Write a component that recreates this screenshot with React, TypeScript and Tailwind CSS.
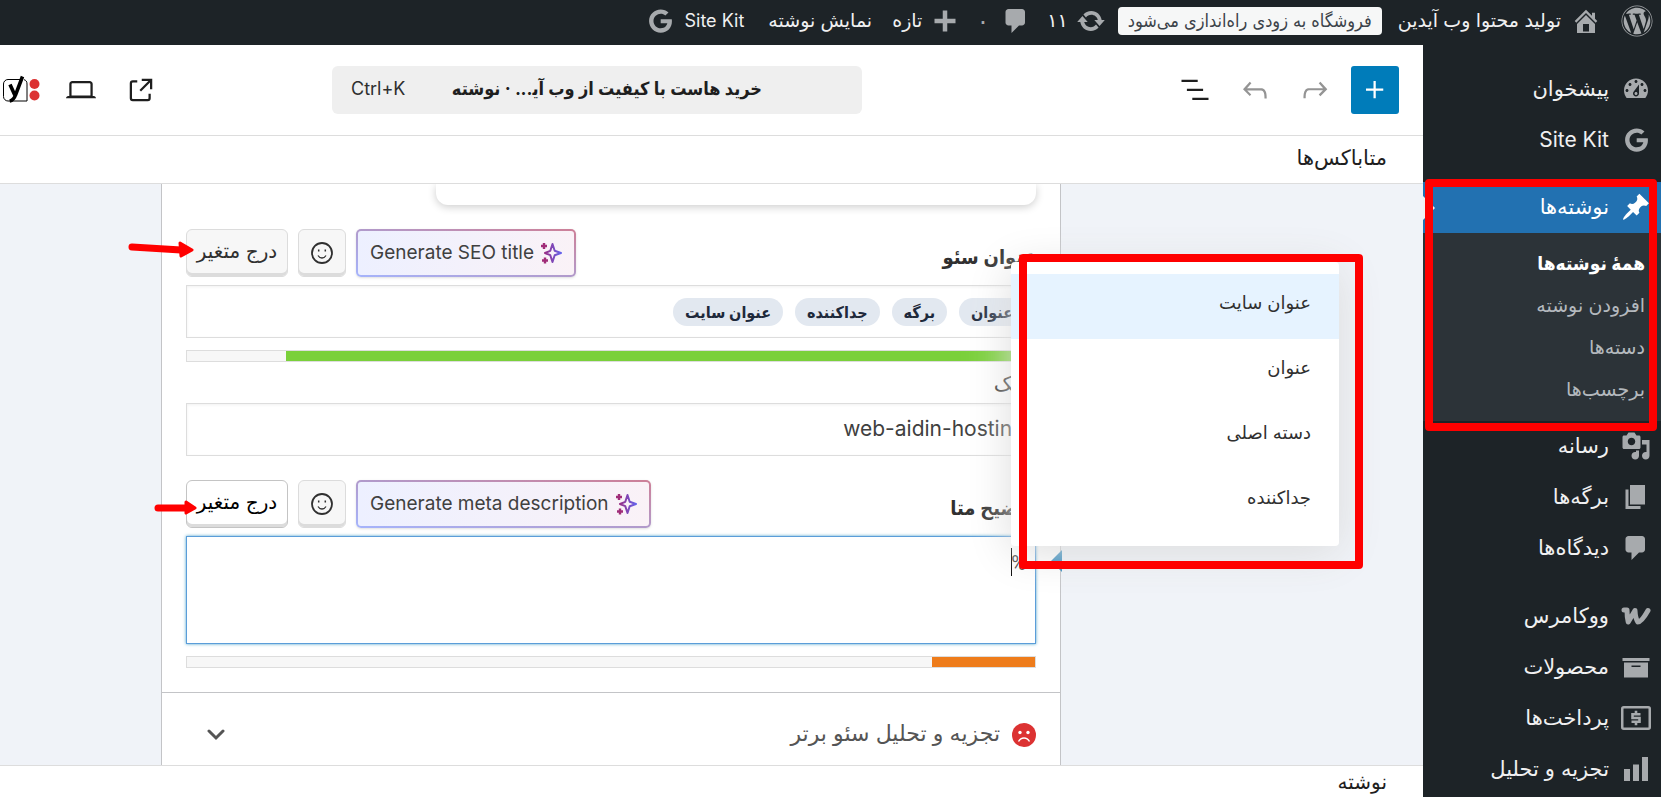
import React from 'react';
import clsx from 'clsx';
import { FaGoogle, FaWordpress } from 'react-icons/fa';

const ICONS = {
  dashboard:
    'M3.76 16h12.48c1.1-1.37 1.76-3.11 1.76-5 0-4.42-3.58-8-8-8s-8 3.58-8 8c0 1.89.66 3.63 1.76 5zM10 4c.55 0 1 .45 1 1s-.45 1-1 1-1-.45-1-1 .45-1 1-1zM6 6c.55 0 1 .45 1 1s-.45 1-1 1-1-.45-1-1 .45-1 1-1zm8 0c.55 0 1 .45 1 1s-.45 1-1 1-1-.45-1-1 .45-1 1-1zm-5.37 5.55L12 7v6c0 1.1-.9 2-2 2s-2-.9-2-2c0-.57.24-1.08.63-1.45zM4 10c.55 0 1 .45 1 1s-.45 1-1 1-1-.45-1-1 .45-1 1-1zm12 0c.55 0 1 .45 1 1s-.45 1-1 1-1-.45-1-1 .45-1 1-1zm-5 3c0-.55-.45-1-1-1s-1 .45-1 1 .45 1 1 1 1-.45 1-1z',
  home: 'M16 8.5l1.53 1.53-1.06 1.06L10 4.6l-6.47 6.49-1.06-1.06L10 2.5l4 4v-2h2v4zm-6-2.46l6 5.99V18H4v-5.97zM12 17v-5H8v5h4z',
  comments: 'M5 2h9c1.1 0 2 .9 2 2v7c0 1.1-.9 2-2 2h-2l-5 5v-5H5c-1.1 0-2-.9-2-2V4c0-1.1.9-2 2-2z',
  update:
    'M10.2 3.28c3.53 0 6.43 2.61 6.92 6h2.08l-3.5 4-3.5-4h2.32c-.45-1.97-2.21-3.45-4.32-3.45-1.45 0-2.73.71-3.54 1.78L4.95 5.66C6.23 4.2 8.11 3.28 10.2 3.28zm-.4 13.44c-3.52 0-6.43-2.61-6.92-6H.8l3.5-4c1.17 1.33 2.33 2.67 3.5 4H5.48c.45 1.97 2.21 3.45 4.32 3.45 1.45 0 2.73-.71 3.54-1.78l1.71 1.95c-1.28 1.46-3.15 2.38-5.25 2.38z',
  plus: 'M17 8.5v3h-5.5V17h-3v-5.5H3v-3h5.5V3h3v5.5H17z',
  pin: 'M10.44 3.02l1.82-1.82 6.36 6.35-1.83 1.82c-1.05-.68-2.48-.57-3.41.36l-.75.75c-.92.93-1.04 2.35-.35 3.41l-1.83 1.82-2.41-2.41-2.8 2.79c-.42.42-3.38 2.71-3.8 2.29s1.86-3.39 2.28-3.81l2.79-2.79L4.1 9.36l1.83-1.82c1.05.69 2.48.57 3.4-.36l.75-.75c.93-.92 1.05-2.35.36-3.41z',
  media:
    'M13 11V4c0-.55-.45-1-1-1h-1.67L9 1H5L3.67 3H2c-.55 0-1 .45-1 1v7c0 .55.45 1 1 1h10c.55 0 1-.45 1-1zM7 4.5c1.38 0 2.5 1.12 2.5 2.5S8.38 9.5 7 9.5 4.5 8.38 4.5 7 5.62 4.5 7 4.5zM14 6h5v10.5c0 1.38-1.12 2.5-2.5 2.5S14 17.88 14 16.5s1.12-2.5 2.5-2.5c.17 0 .34.02.5.05V9h-3V6zm-4 8.05V13h2v3.5c0 1.38-1.12 2.5-2.5 2.5S7 17.88 7 16.5 8.12 14 9.5 14c.17 0 .34.02.5.05z',
  pages: 'M6 15V2h10v13H6zm-1 1h8v2H3V5h2v11z',
  archive: 'M19 4v2H1V4h18zM2 7h16v10H2V7zm11 3V9H7v1h6z',
  chart: 'M18 18V2h-4v16h4zm-6 0V7H8v11h4zm-6 0v-8H2v8h4z',
};

function Dashicon({ name, className }: { name: keyof typeof ICONS; className?: string }) {
  return (
    <svg viewBox="0 0 20 20" className={clsx('w-[30px] h-[30px] shrink-0', className)} fill="currentColor" aria-hidden="true">
      <path fillRule="evenodd" d={ICONS[name]} />
    </svg>
  );
}

function WooIcon() {
  return (
    <svg viewBox="0 0 30 20" className="w-[30px] h-5" fill="none" stroke="currentColor" strokeWidth="5" strokeLinecap="round" strokeLinejoin="round" aria-hidden="true">
      <path d="M3 4h3c0 5 .2 8 1.2 12L14 4.500c.2 5 .6 8 2.800 11.500 2.400 0 6-4 10.200-11.500" />
    </svg>
  );
}

function PaymentIcon() {
  return (
    <svg viewBox="0 0 30 24" className="w-[30px] h-6" fill="none" stroke="currentColor" strokeWidth="2.500" aria-hidden="true">
      <rect x="1.250" y="1.250" width="27.500" height="21.500" rx="1.500" />
      <path d="M19.500 8.300h-8v3.700h7v3.700h-8M15 4.800v2.500M15 16.500v2.700" strokeWidth="2.600" />
    </svg>
  );
}

function GoogleIcon() {
  return <FaGoogle className="w-[23px] h-6" aria-hidden="true" />;
}

function EditorIcon({ d }: { d: string }) {
  return (
    <svg viewBox="0 0 24 24" className="w-9 h-9" fill="currentColor" aria-hidden="true">
      <path d={d} />
    </svg>
  );
}

function AdminBar() {
  return (
    <header className="flex h-[45px] shrink-0 items-center bg-[#1d2327] pb-1 pr-2 text-[19px] leading-7 text-[#f0f0f1]">
      <a href="#about" aria-label="وردپرس" className="text-[#a7aaad]">
        <FaWordpress className="h-8 w-8" />
      </a>
      <a href="#site" className="mr-5 flex items-center gap-[10px]">
        <Dashicon name="home" className="text-[#a7aaad]" />
        {'تولید محتوا وب آیدین'}
      </a>
      <a
        href="#store"
        className="mr-4 rounded-sm bg-[#f6f7f7] px-[10px] font-['Inter','DejaVu_Sans_Condensed',sans-serif] text-[18px] text-[#3c434a]"
      >
        فروشگاه به زودی راه‌اندازی می‌شود
      </a>
      <a href="#updates" className="mr-3 flex items-center gap-2">
        <Dashicon name="update" className="text-[#a7aaad]" />
        ۱۱
      </a>
      <a href="#comments" className="mr-4 flex items-center gap-3 text-[#a7aaad]">
        <Dashicon name="comments" />
        <span className="text-2xl leading-7">۰</span>
      </a>
      <a href="#new" className="mr-4 flex items-center gap-2">
        <Dashicon name="plus" className="text-[#a7aaad]" />
        تازه
      </a>
      <a href="#view" className="mr-5">
        نمایش نوشته
      </a>
      <a href="#sitekit" className="mr-6 flex items-center gap-3 text-[18px]">
        Site Kit
        <span className="text-[#a7aaad]">
          <GoogleIcon />
        </span>
      </a>
    </header>
  );
}

function MenuItem({ icon, label, current }: { icon: React.ReactNode; label: string; current?: boolean }) {
  return (
    <li>
      <a
        href="#menu"
        className={clsx('flex h-[51px] items-center pb-0.5 text-[21px]', current ? 'bg-[#2271b1] text-white' : 'text-[#f0f0f1]')}
      >
        <span className={clsx('ml-0.5 flex w-[50px] shrink-0 justify-center', current ? 'text-white' : 'text-[#a7aaad]')}>{icon}</span>
        {label}
      </a>
    </li>
  );
}

function Sidebar() {
  const sub = ['همهٔ نوشته‌ها', 'افزودن نوشته', 'دسته‌ها', 'برچسب‌ها'];
  return (
    <nav className="w-[238px] shrink-0 bg-[#1d2327] pt-[19px]">
      <ul>
        <MenuItem icon={<Dashicon name="dashboard" />} label="پیشخوان" />
        <MenuItem icon={<GoogleIcon />} label="Site Kit" />
      </ul>
      <div className="relative mt-4">
        <ul>
          <MenuItem icon={<Dashicon name="pin" />} label="نوشته‌ها" current />
        </ul>
        <span className="absolute left-0 top-[14px] h-0 w-0 border-y-[12px] border-l-[12px] border-y-transparent border-l-[#f0f0f1]" />
        <ul className="bg-[#2c3338] py-[10px] pr-4 text-[19px]">
          {sub.map((s, i) => (
            <li key={s}>
              <a
                href="#sub"
                className={clsx(
                  'flex h-[42px] items-center',
                  i === 0 ? "font-['Inter','DejaVu_Sans_Condensed',sans-serif] font-bold text-white" : 'text-[#b4b9be]'
                )}
              >
                {s}
              </a>
            </li>
          ))}
        </ul>
        <span className="pointer-events-none absolute -bottom-[10px] -top-[3px] left-[2px] right-1 z-10 rounded border-8 border-[#ff0000]" />
      </div>
      <ul>
        <MenuItem icon={<Dashicon name="media" />} label="رسانه" />
        <MenuItem icon={<Dashicon name="pages" />} label="برگه‌ها" />
        <MenuItem icon={<Dashicon name="comments" />} label="دیدگاه‌ها" />
      </ul>
      <ul className="mt-[17px]">
        <MenuItem icon={<WooIcon />} label="ووکامرس" />
        <MenuItem icon={<Dashicon name="archive" />} label="محصولات" />
        <MenuItem icon={<PaymentIcon />} label="پرداخت‌ها" />
        <MenuItem icon={<Dashicon name="chart" />} label="تجزیه و تحلیل" />
      </ul>
    </nav>
  );
}

function ToolButton({ label, children, className }: { label: string; children: React.ReactNode; className?: string }) {
  return (
    <button type="button" aria-label={label} className={clsx('flex h-12 w-12 shrink-0 items-center justify-center', className)}>
      {children}
    </button>
  );
}

function EditorHeader() {
  return (
    <div className="flex h-[91px] shrink-0 items-center border-b border-[#ddd] pr-6 text-[#1e1e1e]">
      <div className="flex flex-1 gap-3">
        <ToolButton label="افزودن" className="rounded-[3px] bg-[#007cba] text-white">
          <EditorIcon d="M11 12.500V17.500H12.500V12.500H17.500V11H12.500V6H11V11H6V12.500H11Z" />
        </ToolButton>
        <ToolButton label="انجام دوباره" className="text-[#949494]">
          <EditorIcon d="M15.600 6.500l-1.100 1 2.900 3.300H8c-.9 0-1.700.3-2.300.9-1.400 1.500-1.400 4.200-1.400 5.600v.2h1.500v-.3c0-1.100 0-3.500 1-4.500.3-.3.7-.5 1.300-.5h9.200L14.500 15l1.100 1.100 4.600-4.600-4.600-5z" />
        </ToolButton>
        <ToolButton label="واگرد" className="text-[#949494]">
          <EditorIcon d="M18.300 11.700c-.6-.6-1.400-.9-2.300-.9H6.700l2.900-3.300-1.100-1-4.500 5L8.500 16l1-1-2.700-2.700H16c.5 0 .9.2 1.300.5 1 1 1 3.400 1 4.500v.3h1.500v-.2c0-1.500 0-4.300-1.500-5.700z" />
        </ToolButton>
        <ToolButton label="نمای فهرست">
          <EditorIcon d="M13.800 5.200H3v1.500h10.800V5.200zm-3.600 12v1.500H21v-1.500H10.200zm7.200-6H6.600v1.500h10.800v-1.500z" />
        </ToolButton>
      </div>
      <button
        type="button"
        className="flex h-12 w-[530px] items-center rounded-md bg-[#efefef] pb-1 pl-[19px] pr-[100px] font-['Inter','DejaVu_Sans_Condensed',sans-serif] text-[18px]"
      >
        <span className="grow whitespace-nowrap text-right font-bold">{'خرید هاست با کیفیت از وب آی\u200d...  · نوشته'}</span>
        <span dir="ltr" className="text-[#2f2f2f]">Ctrl+K</span>
      </button>
      <div className="-ml-[3px] flex w-[335px] justify-end gap-3">
        <ToolButton label="نمایش">
          <EditorIcon d="M19.500 4.500h-7V6h4.440l-5.970 5.970 1.060 1.060L18 7.060v4.440h1.500v-7Zm-13 1a2 2 0 0 0-2 2v10a2 2 0 0 0 2 2h10a2 2 0 0 0 2-2v-3H17v3a.5.5 0 0 1-.5.5h-10a.5.5 0 0 1-.5-.5v-10a.5.5 0 0 1 .5-.5h3V5.500h-3Z" />
        </ToolButton>
        <ToolButton label="پیش‌نمایش">
          <EditorIcon d="M20.500 16h-.7V8c0-1.100-.9-2-2-2H6.200c-1.100 0-2 .9-2 2v8h-.7c-.8 0-1.500.7-1.500 1.500h20c0-.8-.7-1.500-1.500-1.500zM5.700 8c0-.3.2-.5.5-.5h11.600c.3 0 .5.2.5.5v7.600H5.700V8z" />
        </ToolButton>
        <ToolButton label="Yoast SEO">
          <svg viewBox="0 0 40 30" className="h-[30px] w-10" aria-hidden="true">
            <path d="M19 4.500H7A4.500 4.500 0 0 0 2.500 9v12.500A4.500 4.500 0 0 0 7 26h19V9c0-2.500-1-3.800-3-4.300" fill="none" stroke="#000" />
            <path d="M9 9.500l5 11M21.500 1.500L14.500 20c-1.200 3.500-2.800 5.500-5.800 6" fill="none" stroke="#000" strokeWidth="3.600" />
            <circle cx="33.500" cy="9" r="5" fill="#dc3232" />
            <circle cx="33.500" cy="20.500" r="5" fill="#dc3232" />
          </svg>
        </ToolButton>
      </div>
    </div>
  );
}

function Sparkles() {
  return (
    <svg viewBox="0 0 22 22" className="h-[22px] w-[22px]" fill="none" aria-hidden="true">
      <defs>
        <linearGradient id="spark" x1="0" y1="0" x2="22" y2="0" gradientUnits="userSpaceOnUse">
          <stop stopColor="#a61e69" />
          <stop offset="1" stopColor="#6366f1" />
        </linearGradient>
      </defs>
      <path d="M12.500 2l2.200 6.800 6.300 2.200-6.300 2.200-2.200 6.800-2.200-6.800L5 11l5.300-2.200z" stroke="url(#spark)" strokeWidth="2" strokeLinejoin="round" />
      <path d="M4 1v6M1 4h6M5 15.500v6M2 18.500h6" stroke="#a02c78" strokeWidth="2.400" />
    </svg>
  );
}

function RedArrow({ className, d, head }: { className: string; d: string; head: string }) {
  return (
    <svg viewBox="0 0 70 20" className={clsx('pointer-events-none absolute h-5 w-[70px]', className)} aria-hidden="true">
      <path d={d} stroke="#ff0000" strokeWidth="7" strokeLinecap="round" />
      <path d={head} fill="#ff0000" stroke="#ff0000" strokeWidth="3" strokeLinejoin="round" />
    </svg>
  );
}

function FieldToolbar({
  htmlFor,
  label,
  generate,
  active,
  arrow,
}: {
  htmlFor: string;
  label: string;
  generate: string;
  active?: boolean;
  arrow: React.ReactNode;
}) {
  return (
    <div className="flex h-12 items-center gap-[10px] text-[#303030]">
      <label
        htmlFor={htmlFor}
        className="h-9 grow self-end font-['Inter','DejaVu_Sans_Condensed',sans-serif] text-[20px] font-bold leading-8"
      >
        {label}
      </label>
      <button
        type="button"
        dir="ltr"
        className="h-12 rounded-[5px] bg-linear-to-tr from-[#a5b4fc] via-[#b19acb] to-[#cd7f97] p-[2px] text-[19px] text-[#404040] shadow-sm"
      >
        <span className="flex h-full items-center gap-1.5 rounded-[3px] bg-linear-to-r from-[#edf0ff] to-[#faf2f7] px-3">
          {generate}
          <Sparkles />
        </span>
      </button>
      <button
        type="button"
        aria-label="شکلک"
        className="flex h-12 w-12 items-center justify-center rounded-md border border-[#dcdcdc] bg-[#f7f7f7] shadow-[inset_0_-3px_0_#dcdcdc]"
      >
        <svg viewBox="0 0 24 24" className="h-6 w-6" fill="none" stroke="currentColor" aria-hidden="true">
          <circle cx="12" cy="12" r="10" strokeWidth="1.800" />
          <path d="M8 14.500c1 1.700 2.400 2.500 4 2.500s3-.8 4-2.500" strokeWidth="1.300" />
          <path d="M8.700 8.500v2M15.300 8.500v2" strokeWidth="1.500" />
        </svg>
      </button>
      <div className="relative">
        <button
          type="button"
          className={clsx(
            'h-12 w-[102px] whitespace-nowrap rounded-md border pb-1 text-[20px]',
            active
              ? 'border-[#c4c4c4] bg-white text-black shadow-[inset_0_-3px_0_#dcdcdc]'
              : 'border-[#dcdcdc] bg-[#f7f7f7] shadow-[inset_0_-3px_0_#dcdcdc]'
          )}
        >
          درج متغیر
        </button>
        {arrow}
      </div>
    </div>
  );
}

function LengthBar({ percent, color }: { percent: number; color: string }) {
  return (
    <div className="mt-3 h-3 border border-[#ddd] bg-[#f7f7f7]">
      <div className={clsx('h-full', color)} style={{ width: `${percent}%` }} />
    </div>
  );
}

function Suggestions() {
  const items = ['عنوان سایت', 'عنوان', 'دسته اصلی', 'جداکننده'];
  return (
    <div className="absolute -right-[303px] -top-[274px] z-10 w-[328px] rounded-sm bg-white py-3 text-[18px] text-[#303030] shadow-[0_6px_45px_#dcdcdc]">
      <ul role="listbox" aria-label="متغیرها">
        {items.map((item, i) => (
          <li key={item} role="option" aria-selected={i === 0} className={clsx('flex h-[65px] items-center px-7 pb-2', i === 0 && 'bg-[#e6f3ff]')}>
            {item}
          </li>
        ))}
      </ul>
      <span className="pointer-events-none absolute -bottom-[23px] -right-6 -top-2 left-2 rounded border-8 border-[#ff0000]" />
    </div>
  );
}

function YoastMetabox() {
  const chips = ['عنوان', 'برگه', 'جداکننده', 'عنوان سایت'];
  return (
    <div className="ml-[161px] mr-[362px] border-x border-[#c3c4c7] bg-white">
      <div className="px-6">
        <div className="h-[21px] w-[600px] rounded-b-xl bg-white shadow-[0_2px_8px_#00000033]" />

        <div className="mt-6">
          <FieldToolbar
            htmlFor="seo-title"
            label="عنوان سئو"
            generate="Generate SEO title"
            arrow={<RedArrow className="-left-[60px] top-[11px]" d="M6 7L55 10" head="M54 3l12 7-11 6z" />}
          />
        </div>
        <div id="seo-title" role="textbox" tabIndex={0} aria-label="عنوان سئو" className="mt-2 flex h-[53px] items-center gap-3 border border-[#ddd] px-[10px] shadow-[inset_0_1px_3px_#0000000f]">
          {chips.map((chip) => (
            <span
              key={chip}
              className="h-7 rounded-full bg-[#e2e8f0] px-3 font-['Inter','DejaVu_Sans_Condensed',sans-serif] text-[16px] font-bold leading-7 text-[#1e293b]"
            >
              {chip}
            </span>
          ))}
        </div>
        <LengthBar percent={88.3} color="bg-[#7ad03a]" />

        <label htmlFor="slug" className="mt-1 block h-9 text-[21px] leading-9 text-[#303030]">
          نامک
        </label>
        <input
          id="slug"
          defaultValue="web-aidin-hosting"
          className="mt-px block h-[53px] w-full border border-[#ddd] px-[10px] pb-0.5 text-[21px] text-[#404040] shadow-[inset_0_1px_3px_#0000000f]"
        />

        <div className="mt-6">
          <FieldToolbar
            htmlFor="meta-description"
            label="توضیح متا"
            generate="Generate meta description"
            active
            arrow={<RedArrow className="-left-[34px] top-[18px]" d="M6 10H36" head="M34 4l9 6-9 5z" />}
          />
        </div>
        <div className="relative mt-2">
          <textarea
            id="meta-description"
            defaultValue="%"
            className="block h-[108px] w-full resize-none border border-[#5b9dd9] px-[9px] py-3 font-['Roboto',sans-serif] text-[20px] leading-7 text-[#404040] shadow-[0_0_3px_#1e8cbecc] outline-none"
          />
          <span className="absolute right-6 top-3 h-7 w-px bg-black" />
          <span className="absolute -right-[26px] top-[14px] h-0 w-0 border-y-[11px] border-r-[11px] border-y-transparent border-r-[#2a86bb]" />
          <Suggestions />
        </div>
        <LengthBar percent={12.2} color="bg-[#ee7c1b]" />
      </div>

      <button type="button" className="mt-6 flex h-[85px] w-full items-center gap-3 border-t border-[#c3c4c7] px-6 text-[22px] text-[#555]">
        <svg viewBox="0 0 24 24" className="h-6 w-6" aria-hidden="true">
          <circle cx="12" cy="12" r="12" fill="#dc3232" />
          <circle cx="8" cy="9.500" r="1.700" fill="#fff" />
          <circle cx="16" cy="9.500" r="1.700" fill="#fff" />
          <path d="M6.500 18.500c1.500-2.700 3.300-3.500 5.500-3.500s4 .8 5.500 3.500" fill="none" stroke="#fff" strokeWidth="1.500" />
        </svg>
        <span className="grow pb-1 text-right">تجزیه و تحلیل سئو برتر</span>
        <svg viewBox="0 0 20 12" className="ml-5 h-3 w-5" fill="none" stroke="#555" strokeWidth="3" strokeLinecap="round" aria-hidden="true">
          <path d="M3 2l7 7 7-7" />
        </svg>
      </button>
    </div>
  );
}

export default function App() {
  return (
    <div
      dir="rtl"
      className="flex h-screen flex-col overflow-hidden bg-white font-['Inter','DejaVu_Sans',sans-serif]"
    >
      <AdminBar />
      <div className="flex min-h-0 flex-1">
        <Sidebar />
        <main className="flex min-w-0 flex-1 flex-col">
          <EditorHeader />
          <h2 className="flex h-12 shrink-0 items-center border-b border-[#ddd] px-9 pb-1 text-[21px] text-[#1e1e1e]">متاباکس‌ها</h2>
          <div className="min-h-0 flex-1 overflow-hidden bg-[#f0f3f8]">
            <YoastMetabox />
          </div>
          <footer className="flex h-8 shrink-0 items-center border-t border-[#ddd] px-9 text-[20px] text-[#1e1e1e]">نوشته</footer>
        </main>
      </div>
    </div>
  );
}
